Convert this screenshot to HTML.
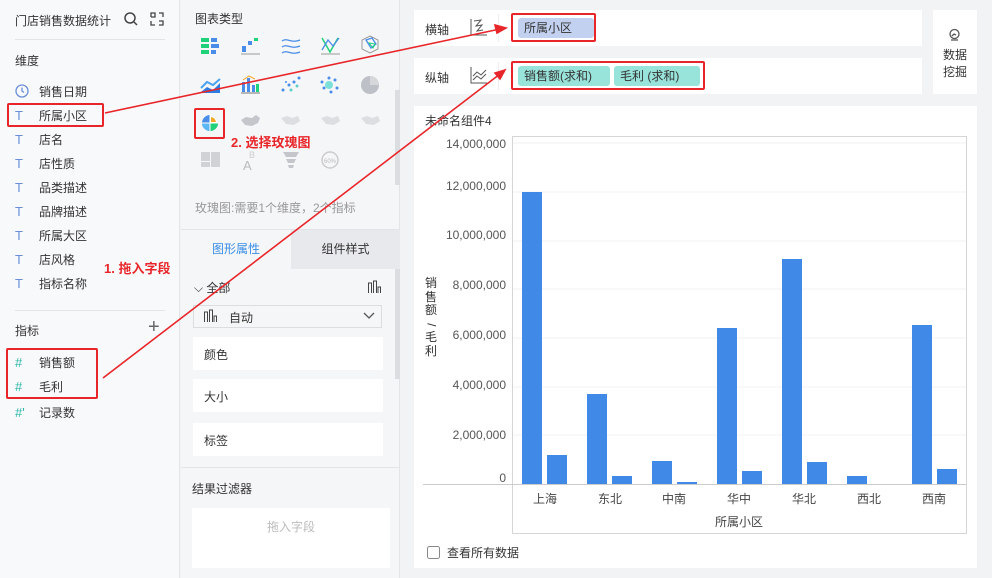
<!DOCTYPE html>
<html><head><meta charset="utf-8"><style>
*{margin:0;padding:0;box-sizing:border-box}
body{width:992px;height:578px;overflow:hidden;font-family:"Liberation Sans","Noto Sans CJK SC",sans-serif;font-size:12px;color:#333;background:#f2f3f5;position:relative}
.a{position:absolute}
#left{left:0;top:0;width:180px;height:578px;background:#f8f9fb;border-right:1px solid #e5e6ea}
#mid{left:181px;top:0;width:219px;height:578px;background:#f5f6f8;border-right:1px solid #e3e4e8}
#right{left:401px;top:0;width:591px;height:578px;background:#f2f3f5}
.it{position:absolute;left:15px;font-size:12px;color:#333}
.it i{font-style:normal;display:inline-block;width:16px;color:#6a8fd8;font-size:13px;margin-right:8px}
.card{position:absolute;background:#fff}
.rb{position:absolute;border:2px solid #e8262a;border-radius:2px}
.g{color:#888}
</style></head><body>
<div id="left" class="a">
  <div class="a" style="left:15px;top:12px;font-size:12px;color:#333">门店销售数据统计</div>
  <svg class="a" style="left:123px;top:11px" width="16" height="16"><circle cx="7" cy="7" r="5" fill="none" stroke="#444" stroke-width="1.5"/><line x1="11" y1="11" x2="14" y2="14" stroke="#444" stroke-width="1.5"/></svg>
  <svg class="a" style="left:149px;top:11px" width="16" height="16" fill="none" stroke="#444" stroke-width="1.3"><path d="M2 6V2h4v4H2M10 2h4v4M2 10v4h4M10 14h4v-4h-4"/></svg>
  <div class="a" style="left:15px;top:39px;width:150px;border-top:1px solid #e3e4e8"></div>
  <div class="a" style="left:15px;top:52px">维度</div>
  <div class="it" style="top:83px"><i><svg width="14" height="14" style="vertical-align:-2px"><circle cx="7" cy="7" r="6" fill="none" stroke="#6a8fd8" stroke-width="1.3"/><path d="M7 3.5V7l2 1.5" fill="none" stroke="#6a8fd8" stroke-width="1.3"/></svg></i>销售日期</div>
  <div class="it" style="top:107px"><i>T</i>所属小区</div>
  <div class="it" style="top:131px"><i>T</i>店名</div>
  <div class="it" style="top:155px"><i>T</i>店性质</div>
  <div class="it" style="top:179px"><i>T</i>品类描述</div>
  <div class="it" style="top:203px"><i>T</i>品牌描述</div>
  <div class="it" style="top:227px"><i>T</i>所属大区</div>
  <div class="it" style="top:251px"><i>T</i>店风格</div>
  <div class="it" style="top:275px"><i>T</i>指标名称</div>
  <div class="a" style="left:15px;top:310px;width:150px;border-top:1px solid #e3e4e8"></div>
  <div class="a" style="left:15px;top:322px">指标</div>
  <div class="a" style="left:148px;top:316px;font-size:20px;color:#666;font-weight:300">+</div>
  <div class="it" style="top:354px"><i style="color:#2bb5a8">#</i>销售额</div>
  <div class="it" style="top:378px"><i style="color:#2bb5a8">#</i>毛利</div>
  <div class="it" style="top:404px"><i style="color:#2bb5a8">#'</i>记录数</div>
  <div class="rb" style="left:7px;top:103px;width:97px;height:24px"></div>
  <div class="rb" style="left:6px;top:348px;width:92px;height:51px"></div>
  <div class="a" style="left:104px;top:258px;color:#e8262a;font-weight:bold;font-size:13px">1. 拖入字段</div>
</div>
<div id="mid" class="a">
  <div class="a" style="left:14px;top:10px">图表类型</div>
  <svg class="a" style="left:0;top:30px" width="219" height="145">
    <g fill="#1fd27a"><rect x="20" y="8" width="8" height="4"/><rect x="20" y="14" width="8" height="4"/><rect x="20" y="20" width="8" height="4"/></g>
    <g fill="#4a8de8"><rect x="30" y="8" width="6" height="4"/><rect x="30" y="14" width="8" height="4"/><rect x="30" y="20" width="5" height="4"/></g>
    <g fill="#4a8de8"><rect x="61" y="16" width="4" height="6"/><rect x="67" y="11" width="4" height="4"/></g><rect x="73" y="8" width="4" height="3" fill="#1fd27a"/><line x1="60" y1="24" x2="79" y2="24" stroke="#999"/>
    <path d="M101 11c5-4 9 3 18-1M101 17c5-4 9 3 18-1M101 23c5-4 9 3 18-1" stroke="#4a8de8" fill="none" stroke-width="1.3"/>
    <path d="M141 8l8 14 8-14" stroke="#1fd27a" fill="none" stroke-width="1.5"/><path d="M141 20l6-10 5 6 6-8" stroke="#4a8de8" fill="none" stroke-width="1.3"/><line x1="140" y1="24" x2="159" y2="24" stroke="#999"/>
    <path d="M189 6l8 4v9l-8 4-8-4v-9z" stroke="#999" fill="none"/><path d="M185 10l6-2 4 6-5 4z" stroke="#4a8de8" fill="none" stroke-width="1.3"/><path d="M188 13l6 1-2 4z" stroke="#1fd27a" fill="none"/>
    <path d="M20 62l6-5 6 3 7-7v10H20z" fill="#2d7de0"/><path d="M20 58l6-6 6 3 7-6" stroke="#4aa3ef" fill="none" stroke-width="2"/>
    <g fill="#4a8de8"><rect x="61" y="52" width="3" height="10"/><rect x="66" y="48" width="3" height="14"/><rect x="71" y="55" width="3" height="7"/></g><rect x="75" y="54" width="3" height="8" fill="#1fd27a"/><path d="M62 50l6-4 6 3" stroke="#f5a623" fill="none"/><line x1="60" y1="63" x2="79" y2="63" stroke="#777"/>
    <g fill="#4a8de8"><circle cx="102" cy="60" r="1.5"/><circle cx="108" cy="55" r="1.5"/><circle cx="113" cy="52" r="1.5"/><circle cx="118" cy="48" r="1.5"/><circle cx="105" cy="52" r="1"/></g><g fill="#5cd0c6"><circle cx="110" cy="60" r="1.5"/><circle cx="116" cy="56" r="1.5"/></g>
    <circle cx="148" cy="55" r="4" fill="#7de0d8"/><g fill="#4a8de8"><circle cx="141" cy="52" r="1.5"/><circle cx="143" cy="58" r="1.5"/><circle cx="154" cy="50" r="1.5"/><circle cx="156" cy="58" r="1.5"/><circle cx="148" cy="48" r="1.5"/><circle cx="150" cy="62" r="1.5"/></g>
    <circle cx="189" cy="55" r="9" fill="#bdc0c6"/><path d="M189 46v9h9a9 9 0 0 0-9-9z" fill="#d5d7db"/>
    <circle cx="29" cy="93" r="8" fill="#4a8de8"/><path d="M29 93h8a8 8 0 0 1-8 8z" fill="#1fd27a"/><path d="M29 93v-8a8 8 0 0 1 8 8z" fill="#fff"/><path d="M30 92v-5a6 6 0 0 1 5 5z" fill="#f5a623"/><path d="M29 93v8a8 8 0 0 1-8-8z" fill="#5cb8f5"/><path d="M21 93h16M29 85v16" stroke="#fff"/>
    <g fill="#c4c6cb"><path d="M60 90l5-3 6 1 4-3 4 3-2 5-6 3-7-1z"/><path d="M100 88l6-2 5 2 6-2 2 5-6 4-8-1z" opacity=".5"/><path d="M140 88l6-2 5 2 6-2 2 5-6 4-8-1z" opacity=".5"/><path d="M180 88l6-2 5 2 6-2 2 5-6 4-8-1z" opacity=".5"/></g>
    <g fill="#d0d2d6"><rect x="20" y="122" width="9" height="9"/><rect x="30" y="122" width="9" height="15"/><rect x="20" y="132" width="9" height="5"/></g>
    <text x="62" y="140" font-size="13" fill="#bbb" font-family="Liberation Sans">A</text><text x="68" y="128" font-size="9" fill="#ccc" font-family="Liberation Sans">B</text>
    <path d="M102 122h16l-3 5h-10zM105 129h10l-2 4h-6zM107 135h6l-1 3h-4z" fill="#c4c6cb"/>
    <circle cx="149" cy="130" r="8" fill="none" stroke="#ccc" stroke-width="1.5"/><text x="143" y="133" font-size="6" fill="#bbb" font-family="Liberation Sans">60%</text>
  </svg>
  <div class="rb" style="left:13px;top:108px;width:31px;height:31px"></div>
  <div class="a" style="left:50px;top:132px;color:#e8262a;font-weight:bold;font-size:13px">2. 选择玫瑰图</div>
  <div class="a g" style="left:14px;top:199px;color:#999">玫瑰图:需要1个维度，2个指标</div>
  <div class="a" style="left:214px;top:90px;width:5px;height:95px;background:#dcdde0"></div>
  <div class="a" style="left:0;top:229px;width:219px;border-top:1px solid #e3e4e8"></div>
  <div class="a" style="left:0;top:230px;width:110px;height:39px;line-height:39px;text-align:center;color:#3a8ee6">图形属性</div>
  <div class="a" style="left:110px;top:230px;width:109px;height:39px;line-height:39px;text-align:center;background:#e8e9ec;color:#333">组件样式</div>
  <div class="a" style="left:214px;top:269px;width:5px;height:110px;background:#dcdde0"></div>
  <div class="a" style="left:13px;top:279px">⌵ 全部</div>
  <svg class="a" style="left:186px;top:280px" width="14" height="14" fill="none" stroke="#444"><path d="M1.5 13V3h3v10M6.5 13V1h3v12M11 13V7h2.5v6"/></svg>
  <div class="a" style="left:12px;top:305px;width:189px;height:23px;border:1px solid #dcdde0;background:#f5f6f8"></div>
  <svg class="a" style="left:22px;top:309px" width="14" height="14" fill="none" stroke="#444"><path d="M1.5 13V3h3v10M6.5 13V1h3v12M11 13V7h2.5v6"/></svg>
  <div class="a" style="left:48px;top:309px">自动</div>
  <svg class="a" style="left:182px;top:312px" width="12" height="8"><path d="M1 1l5 5 5-5" stroke="#555" fill="none" stroke-width="1.3"/></svg>
  <div class="card" style="left:12px;top:337px;width:190px;height:33px"></div><div class="a" style="left:23px;top:346px">颜色</div>
  <div class="card" style="left:12px;top:379px;width:190px;height:33px"></div><div class="a" style="left:23px;top:388px">大小</div>
  <div class="card" style="left:12px;top:423px;width:190px;height:33px"></div><div class="a" style="left:23px;top:432px">标签</div>
  <div class="a" style="left:0;top:467px;width:219px;border-top:1px solid #e3e4e8"></div>
  <div class="a" style="left:11px;top:480px">结果过滤器</div>
  <div class="card" style="left:11px;top:508px;width:198px;height:60px;text-align:center;line-height:38px;color:#bbb">拖入字段</div>
</div>
<div id="right" class="a">
  <div class="card" style="left:13px;top:10px;width:508px;height:36px"></div>
  <div class="a" style="left:24px;top:21px">横轴</div>
  <svg class="a" style="left:69px;top:18px" width="18" height="18" fill="none" stroke="#555"><path d="M1 1v16h16"/><path d="M4 3l7-1-5 6 6-1-5 6 6-1"/></svg>
  <div class="a" style="left:97px;top:14px;height:28px;border-left:1px solid #eee"></div>
  <div class="a" style="left:117px;top:18px;width:76px;height:20px;background:#c3d1f0;border-radius:3px;padding-left:6px;line-height:20px">所属小区</div>
  <div class="card" style="left:13px;top:58px;width:508px;height:36px"></div>
  <div class="a" style="left:24px;top:69px">纵轴</div>
  <svg class="a" style="left:69px;top:66px" width="18" height="18" fill="none" stroke="#555"><path d="M1 1v16h16"/><path d="M3 10l4-4 4 3 5-5M3 14l4-4 4 3 5-5"/></svg>
  <div class="a" style="left:97px;top:62px;height:28px;border-left:1px solid #eee"></div>
  <div class="a" style="left:117px;top:66px;width:92px;height:20px;background:#98e3da;border-radius:3px;padding-left:6px;line-height:20px">销售额(求和)</div>
  <div class="a" style="left:213px;top:66px;width:86px;height:20px;background:#98e3da;border-radius:3px;padding-left:6px;line-height:20px">毛利 (求和)</div>
  <div class="rb" style="left:110px;top:13px;width:85px;height:29px"></div>
  <div class="rb" style="left:110px;top:61px;width:194px;height:29px"></div>
  <div class="card" style="left:532px;top:10px;width:44px;height:84px"></div>
  <svg class="a" style="left:547px;top:28px" width="13" height="13" fill="none" stroke="#555" stroke-width="1.3"><circle cx="6.5" cy="6" r="4.5"/><path d="M4 8l2-2 2 1M3 12h7"/></svg>
  <div class="a" style="left:542px;top:47px;line-height:17px;text-align:center">数据<br>挖掘</div>
  <div class="card" style="left:13px;top:106px;width:563px;height:462px"></div>
  <div class="a" style="left:24px;top:112px">未命名组件4</div>
  <div class="a" style="left:23px;top:277px;width:14px;line-height:13.5px;font-size:12px;text-align:center">销<br>售<br>额<br><span style="display:inline-block;transform:rotate(90deg)">/</span><br>毛<br>利</div>
  <svg class="a" style="left:0;top:0" width="591" height="578" font-family="Liberation Sans" font-size="12" fill="#555">
    <rect x="111.5" y="136.5" width="454" height="397" fill="none" stroke="#d5d5d5"/>
    <g stroke="#f0f0f0"><line x1="112" y1="143" x2="565" y2="143"/><line x1="112" y1="192" x2="565" y2="192"/><line x1="112" y1="241" x2="565" y2="241"/><line x1="112" y1="289" x2="565" y2="289"/><line x1="112" y1="338" x2="565" y2="338"/><line x1="112" y1="387" x2="565" y2="387"/><line x1="112" y1="435" x2="565" y2="435"/></g>
    <line x1="22" y1="484.5" x2="565" y2="484.5" stroke="#ccc"/>
    <g text-anchor="end"><text x="105" y="148">14,000,000</text><text x="105" y="190">12,000,000</text><text x="105" y="239">10,000,000</text><text x="105" y="289">8,000,000</text><text x="105" y="339">6,000,000</text><text x="105" y="389">4,000,000</text><text x="105" y="439">2,000,000</text><text x="105" y="482">0</text></g>
    <g fill="#4189e6">
      <rect x="121" y="192" width="20" height="292"/><rect x="146" y="455" width="20" height="29"/>
      <rect x="186" y="394" width="20" height="90"/><rect x="211" y="476" width="20" height="8"/>
      <rect x="251" y="461" width="20" height="23"/><rect x="276" y="482" width="20" height="2"/>
      <rect x="316" y="328" width="20" height="156"/><rect x="341" y="471" width="20" height="13"/>
      <rect x="381" y="259" width="20" height="225"/><rect x="406" y="462" width="20" height="22"/>
      <rect x="446" y="476" width="20" height="8"/>
      <rect x="511" y="325" width="20" height="159"/><rect x="536" y="469" width="20" height="15"/>
    </g>
    <g text-anchor="middle" fill="#444"><text x="144" y="503">上海</text><text x="209" y="503">东北</text><text x="273" y="503">中南</text><text x="338" y="503">华中</text><text x="403" y="503">华北</text><text x="468" y="503">西北</text><text x="533" y="503">西南</text><text x="338" y="526">所属小区</text></g>
    <rect x="26.5" y="546.5" width="12" height="12" rx="2" fill="none" stroke="#888"/>
    <text x="46" y="557" fill="#333">查看所有数据</text>
  </svg>
</div>
<svg class="a" style="left:0;top:0;pointer-events:none" width="992" height="578">
  <g stroke="#e8262a" stroke-width="1.6" fill="#e8262a">
    <line x1="105" y1="113" x2="500" y2="29"/><path d="M506 28l-11-3 2 8z"/>
    <line x1="103" y1="378" x2="500" y2="74"/><path d="M505 70l-10 3 5 6z"/>
  </g>
</svg>
</body></html>
